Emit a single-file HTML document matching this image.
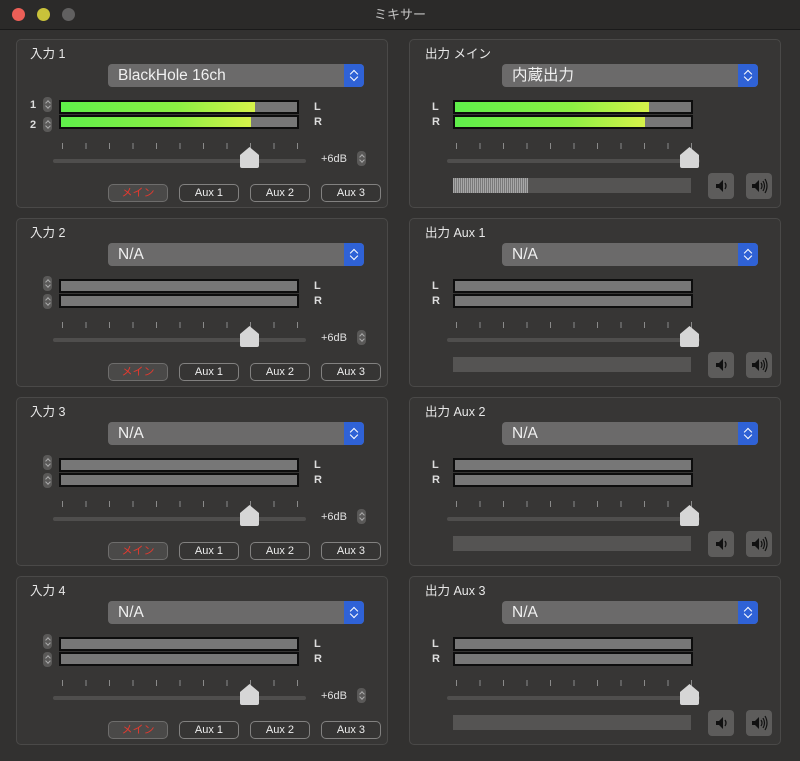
<!DOCTYPE html><html><head><meta charset="utf-8"><style>
*{margin:0;padding:0;box-sizing:border-box}
body{width:800px;height:761px;background:#323130;position:relative;overflow:hidden;font-family:"Liberation Sans","Noto Sans CJK JP",sans-serif;color:#e6e6e6}
.tb{position:absolute;left:0;top:0;width:800px;height:30px;background:#2b2a29;border-bottom:1px solid #1a1a1a;text-align:center;font-size:13px;line-height:30px;color:#c4c4c4}
.dot{position:absolute;top:8px;width:13px;height:13px;border-radius:50%}
.p{position:absolute;width:372px;height:169px;border:1px solid #4a4948;border-radius:5px;background:#373635}
.lb{position:absolute;left:13px;top:3px;font-size:12.5px;color:#e8e8e8}
.pop{position:absolute;left:91px;top:24px;width:256px;height:23px;background:#6b6a6a;border-radius:4px;font-size:15.5px;line-height:23px;padding-left:10px;color:#f0f0f0}
.pop i{position:absolute;right:0;top:0;width:20px;height:23px;background:#2f62d6;border-radius:0 4px 4px 0;font-style:normal}
.pop i:before,.pop i:after{content:"";position:absolute;left:7px;width:5px;height:5px;border-left:1.5px solid #fff;border-top:1.5px solid #fff}
.pop i:before{top:7px;transform:rotate(45deg)}
.pop i:after{top:10px;transform:rotate(225deg)}
.m{position:absolute;width:240px;height:14px;background:#777;border:2px solid #0d0d0d}
.m b{position:absolute;left:0;top:0;bottom:0;background:linear-gradient(to right,#5ff04a,#8cf043 60%,#d6f24a)}
.ch{position:absolute;font-size:11px;font-weight:bold;color:#ddd}
.st{position:absolute;width:9px;height:15px;border-radius:4px;background:#5a5958}
.st:before,.st:after{content:"";position:absolute;left:3px;width:3px;height:3px;border-left:1px solid #aaa;border-top:1px solid #aaa}
.st:before{top:4px;transform:rotate(45deg)}
.st:after{top:7px;transform:rotate(225deg)}
.tk{position:absolute;width:237px;height:6px;background:repeating-linear-gradient(to right,#8a8a8a 0 1px,transparent 1px 23.5px)}
.tr{position:absolute;width:253px;height:4px;border-radius:2px;background:#4f4e4d}
.kn{position:absolute;width:19px;height:21px}
.db{position:absolute;left:304px;top:113px;font-size:11px;color:#e0e0e0}
.bt{position:absolute;top:144px;width:60px;height:18px;border:1.5px solid #828180;border-radius:5px;font-size:11px;line-height:16px;text-align:center;color:#eee;background:#363534}
.bt.r{color:#e33a2f;background:#4a4948;border-color:#6e6d6c}
.bar{position:absolute;left:43px;top:138px;width:238px;height:15px;background:#555453}
.sp{position:absolute;top:133px;width:26px;height:26px;border-radius:4px;background:#5d5c5b}
</style></head><body>
<div class="tb">ミキサー
<div class="dot" style="left:12px;background:#ec5f57"></div>
<div class="dot" style="left:37px;background:#c9c23a"></div>
<div class="dot" style="left:62px;background:#616060"></div>
</div>

<div class="p" style="left:16px;top:39px">
<div class="lb">入力 1</div><div class="pop">BlackHole 16ch<i></i></div>
<div class="ch" style="left:13px;top:59px">1</div><div class="ch" style="left:13px;top:79px">2</div>
<div class="st" style="left:26px;top:57px"></div><div class="st" style="left:26px;top:77px"></div>
<div class="m" style="left:42px;top:60px"><b style="width:194px"></b></div>
<div class="m" style="left:42px;top:75px"><b style="width:190px"></b></div>
<div class="ch" style="left:297px;top:61px">L</div><div class="ch" style="left:297px;top:76px">R</div>
<div class="tk" style="left:45px;top:103px"></div><div class="tr" style="left:36px;top:119px"></div>
<svg class="kn" style="left:223px;top:107px" viewBox="0 0 19 21"><path d="M9.5 0L19 8V19Q19 21 17 21H2Q0 21 0 19V8Z" fill="#d6d6d6"/></svg>
<div class="db">+6dB</div><div class="st" style="left:340px;top:111px"></div>
<div class="bt r" style="left:91px">メイン</div><div class="bt" style="left:162px">Aux 1</div><div class="bt" style="left:233px">Aux 2</div><div class="bt" style="left:304px">Aux 3</div>
</div>

<div class="p" style="left:16px;top:218px">
<div class="lb">入力 2</div><div class="pop">N/A<i></i></div>
<div class="st" style="left:26px;top:57px"></div><div class="st" style="left:26px;top:75px"></div>
<div class="m" style="left:42px;top:60px"></div><div class="m" style="left:42px;top:75px"></div>
<div class="ch" style="left:297px;top:61px">L</div><div class="ch" style="left:297px;top:76px">R</div>
<div class="tk" style="left:45px;top:103px"></div><div class="tr" style="left:36px;top:119px"></div>
<svg class="kn" style="left:223px;top:107px" viewBox="0 0 19 21"><path d="M9.5 0L19 8V19Q19 21 17 21H2Q0 21 0 19V8Z" fill="#d6d6d6"/></svg>
<div class="db">+6dB</div><div class="st" style="left:340px;top:111px"></div>
<div class="bt r" style="left:91px">メイン</div><div class="bt" style="left:162px">Aux 1</div><div class="bt" style="left:233px">Aux 2</div><div class="bt" style="left:304px">Aux 3</div>
</div>

<div class="p" style="left:16px;top:397px">
<div class="lb">入力 3</div><div class="pop">N/A<i></i></div>
<div class="st" style="left:26px;top:57px"></div><div class="st" style="left:26px;top:75px"></div>
<div class="m" style="left:42px;top:60px"></div><div class="m" style="left:42px;top:75px"></div>
<div class="ch" style="left:297px;top:61px">L</div><div class="ch" style="left:297px;top:76px">R</div>
<div class="tk" style="left:45px;top:103px"></div><div class="tr" style="left:36px;top:119px"></div>
<svg class="kn" style="left:223px;top:107px" viewBox="0 0 19 21"><path d="M9.5 0L19 8V19Q19 21 17 21H2Q0 21 0 19V8Z" fill="#d6d6d6"/></svg>
<div class="db">+6dB</div><div class="st" style="left:340px;top:111px"></div>
<div class="bt r" style="left:91px">メイン</div><div class="bt" style="left:162px">Aux 1</div><div class="bt" style="left:233px">Aux 2</div><div class="bt" style="left:304px">Aux 3</div>
</div>

<div class="p" style="left:16px;top:576px">
<div class="lb">入力 4</div><div class="pop">N/A<i></i></div>
<div class="st" style="left:26px;top:57px"></div><div class="st" style="left:26px;top:75px"></div>
<div class="m" style="left:42px;top:60px"></div><div class="m" style="left:42px;top:75px"></div>
<div class="ch" style="left:297px;top:61px">L</div><div class="ch" style="left:297px;top:76px">R</div>
<div class="tk" style="left:45px;top:103px"></div><div class="tr" style="left:36px;top:119px"></div>
<svg class="kn" style="left:223px;top:107px" viewBox="0 0 19 21"><path d="M9.5 0L19 8V19Q19 21 17 21H2Q0 21 0 19V8Z" fill="#d6d6d6"/></svg>
<div class="db">+6dB</div><div class="st" style="left:340px;top:111px"></div>
<div class="bt r" style="left:91px">メイン</div><div class="bt" style="left:162px">Aux 1</div><div class="bt" style="left:233px">Aux 2</div><div class="bt" style="left:304px">Aux 3</div>
</div>

<div class="p" style="left:409px;top:39px">
<div class="lb" style="left:15px">出力 メイン</div><div class="pop" style="left:92px">内蔵出力<i></i></div>
<div class="ch" style="left:22px;top:61px">L</div><div class="ch" style="left:22px;top:76px">R</div>
<div class="m" style="left:43px;top:60px"><b style="width:194px"></b></div>
<div class="m" style="left:43px;top:75px"><b style="width:190px"></b></div>
<div class="tk" style="left:46px;top:103px"></div><div class="tr" style="left:37px;top:119px"></div>
<svg class="kn" style="left:270px;top:107px" viewBox="0 0 19 21"><path d="M9.5 0L19 8V19Q19 21 17 21H2Q0 21 0 19V8Z" fill="#d6d6d6"/></svg>
<div class="bar"><div style="position:absolute;left:0;top:0;width:75px;height:15px;background:repeating-linear-gradient(to right,#a8a8a8 0 1px,#7a7a7a 1px 2px)"></div></div>
<div class="sp" style="left:298px"><svg width="26" height="26" viewBox="0 0 26 26"><path d="M8 11h3l4-4v12l-4-4H8z" fill="#111"/><path d="M17 10q2 3 0 6" stroke="#111" stroke-width="1.3" fill="none"/></svg></div>
<div class="sp" style="left:336px"><svg width="26" height="26" viewBox="0 0 26 26"><path d="M6 11h3l4-4v12l-4-4H6z" fill="#111"/><path d="M15 10q2 3 0 6M17 8q3 5 0 10M19 6q4 7 0 14" stroke="#111" stroke-width="1.2" fill="none"/></svg></div>
</div>

<div class="p" style="left:409px;top:218px">
<div class="lb" style="left:15px">出力 Aux 1</div><div class="pop" style="left:92px">N/A<i></i></div>
<div class="ch" style="left:22px;top:61px">L</div><div class="ch" style="left:22px;top:76px">R</div>
<div class="m" style="left:43px;top:60px"></div><div class="m" style="left:43px;top:75px"></div>
<div class="tk" style="left:46px;top:103px"></div><div class="tr" style="left:37px;top:119px"></div>
<svg class="kn" style="left:270px;top:107px" viewBox="0 0 19 21"><path d="M9.5 0L19 8V19Q19 21 17 21H2Q0 21 0 19V8Z" fill="#d6d6d6"/></svg>
<div class="bar"></div>
<div class="sp" style="left:298px"><svg width="26" height="26" viewBox="0 0 26 26"><path d="M8 11h3l4-4v12l-4-4H8z" fill="#111"/><path d="M17 10q2 3 0 6" stroke="#111" stroke-width="1.3" fill="none"/></svg></div>
<div class="sp" style="left:336px"><svg width="26" height="26" viewBox="0 0 26 26"><path d="M6 11h3l4-4v12l-4-4H6z" fill="#111"/><path d="M15 10q2 3 0 6M17 8q3 5 0 10M19 6q4 7 0 14" stroke="#111" stroke-width="1.2" fill="none"/></svg></div>
</div>

<div class="p" style="left:409px;top:397px">
<div class="lb" style="left:15px">出力 Aux 2</div><div class="pop" style="left:92px">N/A<i></i></div>
<div class="ch" style="left:22px;top:61px">L</div><div class="ch" style="left:22px;top:76px">R</div>
<div class="m" style="left:43px;top:60px"></div><div class="m" style="left:43px;top:75px"></div>
<div class="tk" style="left:46px;top:103px"></div><div class="tr" style="left:37px;top:119px"></div>
<svg class="kn" style="left:270px;top:107px" viewBox="0 0 19 21"><path d="M9.5 0L19 8V19Q19 21 17 21H2Q0 21 0 19V8Z" fill="#d6d6d6"/></svg>
<div class="bar"></div>
<div class="sp" style="left:298px"><svg width="26" height="26" viewBox="0 0 26 26"><path d="M8 11h3l4-4v12l-4-4H8z" fill="#111"/><path d="M17 10q2 3 0 6" stroke="#111" stroke-width="1.3" fill="none"/></svg></div>
<div class="sp" style="left:336px"><svg width="26" height="26" viewBox="0 0 26 26"><path d="M6 11h3l4-4v12l-4-4H6z" fill="#111"/><path d="M15 10q2 3 0 6M17 8q3 5 0 10M19 6q4 7 0 14" stroke="#111" stroke-width="1.2" fill="none"/></svg></div>
</div>

<div class="p" style="left:409px;top:576px">
<div class="lb" style="left:15px">出力 Aux 3</div><div class="pop" style="left:92px">N/A<i></i></div>
<div class="ch" style="left:22px;top:61px">L</div><div class="ch" style="left:22px;top:76px">R</div>
<div class="m" style="left:43px;top:60px"></div><div class="m" style="left:43px;top:75px"></div>
<div class="tk" style="left:46px;top:103px"></div><div class="tr" style="left:37px;top:119px"></div>
<svg class="kn" style="left:270px;top:107px" viewBox="0 0 19 21"><path d="M9.5 0L19 8V19Q19 21 17 21H2Q0 21 0 19V8Z" fill="#d6d6d6"/></svg>
<div class="bar"></div>
<div class="sp" style="left:298px"><svg width="26" height="26" viewBox="0 0 26 26"><path d="M8 11h3l4-4v12l-4-4H8z" fill="#111"/><path d="M17 10q2 3 0 6" stroke="#111" stroke-width="1.3" fill="none"/></svg></div>
<div class="sp" style="left:336px"><svg width="26" height="26" viewBox="0 0 26 26"><path d="M6 11h3l4-4v12l-4-4H6z" fill="#111"/><path d="M15 10q2 3 0 6M17 8q3 5 0 10M19 6q4 7 0 14" stroke="#111" stroke-width="1.2" fill="none"/></svg></div>
</div>
</body></html>
